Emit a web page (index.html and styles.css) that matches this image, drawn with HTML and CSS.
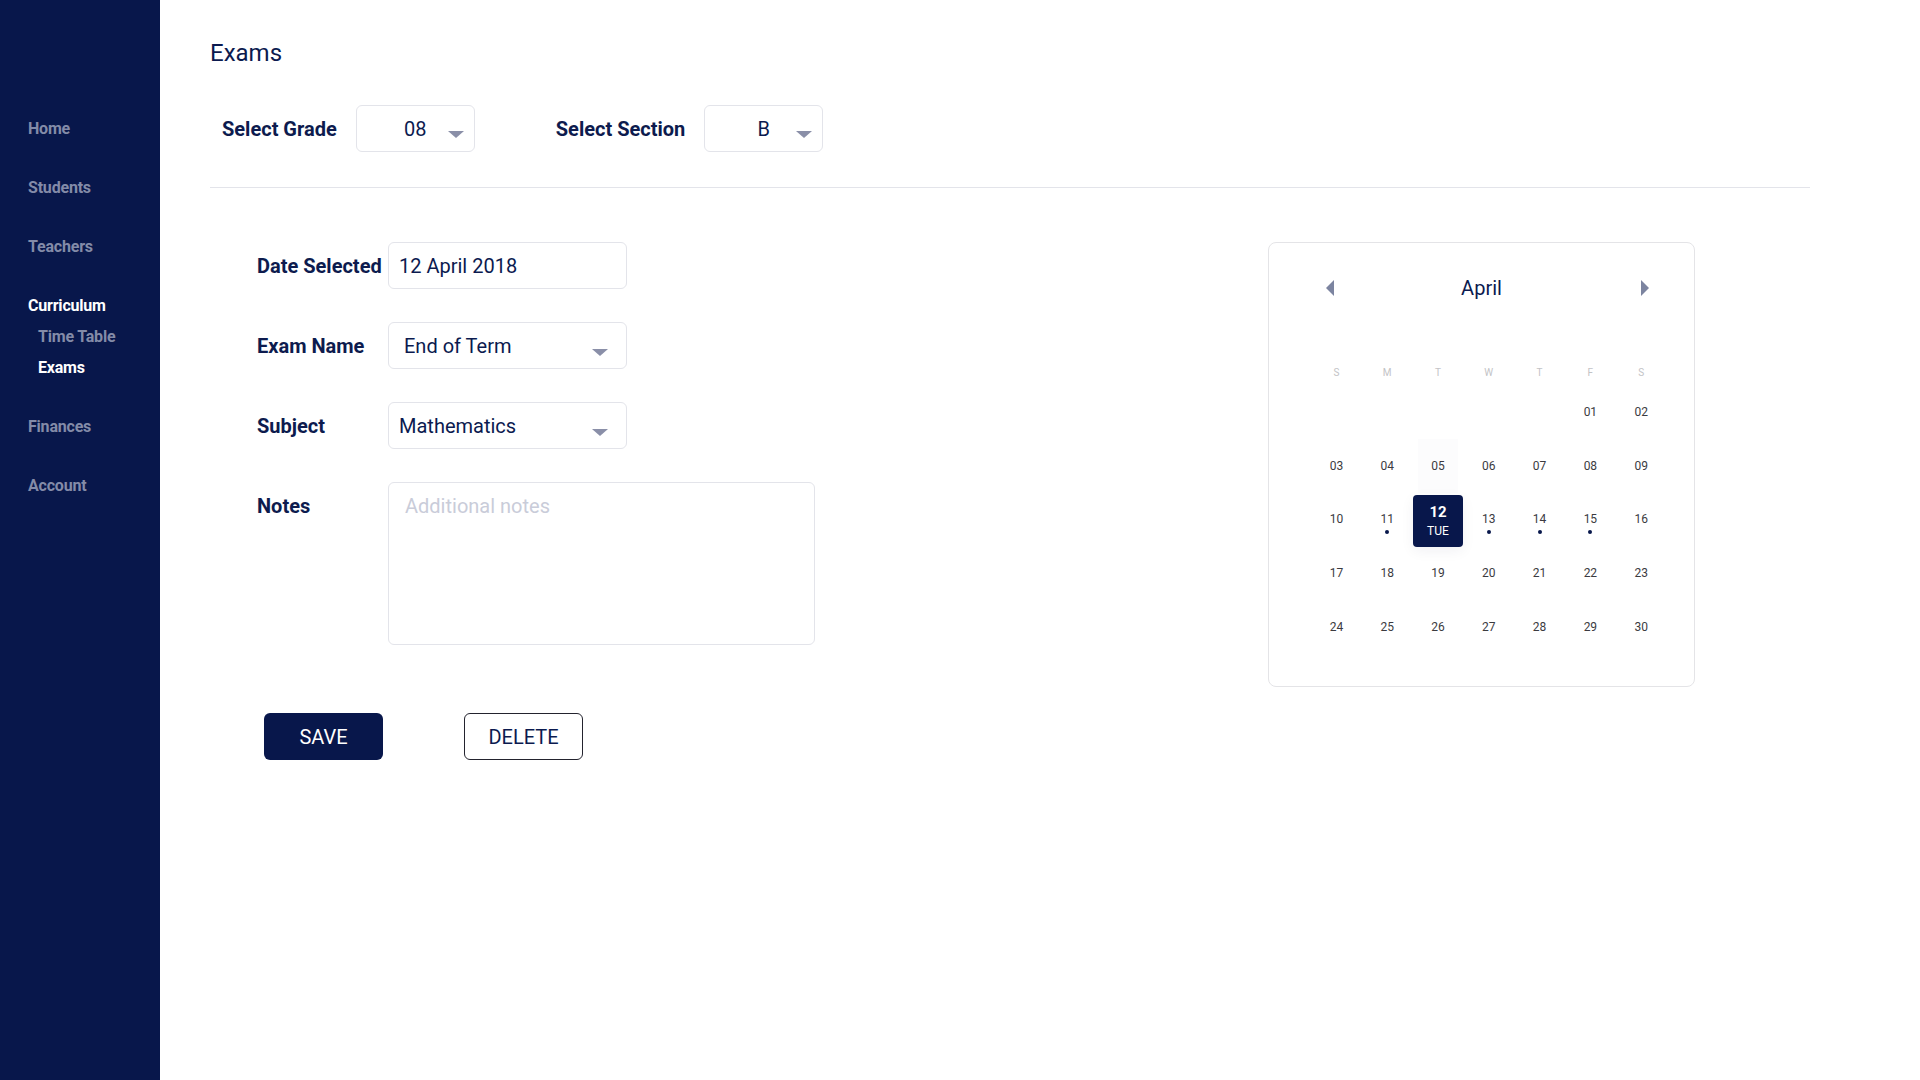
FILE: index.html
```html
<!DOCTYPE html>
<html lang="en">
<head>
<meta charset="utf-8">
<title>Exams</title>
<link rel="stylesheet" href="styles.css">
</head>
<body>
<div class="app">
  <aside class="sidebar">
    <nav class="nav">
      <a class="nav-item">Home</a>
      <a class="nav-item">Students</a>
      <a class="nav-item">Teachers</a>
      <a class="nav-item active has-sub">Curriculum</a>
      <a class="nav-sub">Time Table</a>
      <a class="nav-sub active last">Exams</a>
      <a class="nav-item">Finances</a>
      <a class="nav-item">Account</a>
    </nav>
  </aside>
  <main class="main">
    <h1 class="title">Exams</h1>
    <div class="filters">
      <span class="label filter-label">Select Grade</span>
      <div class="select select-sm"><span class="value">08</span><span class="caret caret-sm"></span></div>
      <span class="label filter-label filter-gap">Select Section</span>
      <div class="select select-sm"><span class="value">B</span><span class="caret caret-sm"></span></div>
    </div>
    <div class="divider"></div>
    <div class="content">
      <div class="form">
        <div class="row">
          <span class="label row-label">Date Selected</span>
          <div class="field">12 April 2018</div>
        </div>
        <div class="row">
          <span class="label row-label">Exam Name</span>
          <div class="field field-select field-wide-pad">End of Term<span class="caret caret-lg"></span></div>
        </div>
        <div class="row">
          <span class="label row-label">Subject</span>
          <div class="field field-select">Mathematics<span class="caret caret-lg"></span></div>
        </div>
        <div class="row row-notes">
          <span class="label row-label notes-label">Notes</span>
          <div class="textarea"><span class="placeholder">Additional notes</span></div>
        </div>
        <div class="buttons">
          <button class="btn btn-primary">SAVE</button>
          <button class="btn btn-outline">DELETE</button>
        </div>
      </div>
      <div class="calendar">
        <div class="cal-head">
          <span class="arrow arrow-left"></span>
          <span class="month">April</span>
          <span class="arrow arrow-right"></span>
        </div>
        <div class="cal-grid cal-week">
          <span>S</span><span>M</span><span>T</span><span>W</span><span>T</span><span>F</span><span>S</span>
        </div>
        <div class="cal-grid cal-days">
          <span class="cell"></span><span class="cell"></span><span class="cell"></span><span class="cell"></span><span class="cell"></span>
          <span class="cell">01</span><span class="cell">02</span>
          <span class="cell">03</span><span class="cell">04</span><span class="cell soft">05</span><span class="cell">06</span><span class="cell">07</span><span class="cell">08</span><span class="cell">09</span>
          <span class="cell">10</span><span class="cell dot">11</span>
          <span class="cell"><span class="selected"><span class="sel-num">12</span><span class="sel-day">TUE</span></span></span>
          <span class="cell dot">13</span><span class="cell dot">14</span><span class="cell dot">15</span><span class="cell">16</span>
          <span class="cell">17</span><span class="cell">18</span><span class="cell">19</span><span class="cell">20</span><span class="cell">21</span><span class="cell">22</span><span class="cell">23</span>
          <span class="cell">24</span><span class="cell">25</span><span class="cell">26</span><span class="cell">27</span><span class="cell">28</span><span class="cell">29</span><span class="cell">30</span>
        </div>
      </div>
    </div>
  </main>
</div>
</body>
</html>
```
FILE: styles.css
```css
* { box-sizing: border-box; }

body {
  margin: 0;
  font-family: Roboto, "Liberation Sans", Arial, sans-serif;
  color: #0b1a4f;
  background: #ffffff;
}

.app {
  display: flex;
  min-height: 100vh;
}

/* Sidebar */
.sidebar {
  width: 160px;
  flex-shrink: 0;
  background: #08174b;
  padding-top: 119px;
}

.nav {
  display: flex;
  flex-direction: column;
  padding-left: 28px;
}

.nav-item,
.nav-sub {
  font-size: 16px;
  font-weight: 700;
  line-height: 20px;
  color: #838ba8;
  margin-bottom: 39px;
  letter-spacing: -0.2px;
}

.nav-item.has-sub { margin-bottom: 11px; }
.nav-sub { padding-left: 10px; margin-bottom: 11px; }
.nav-sub.last { margin-bottom: 39px; }
.nav .active { color: #ffffff; }

/* Main */
.main {
  flex: 1;
  padding: 38px 110px 0 50px;
}

.title {
  margin: 0;
  font-size: 24px;
  font-weight: 400;
  line-height: 30px;
  color: #0b1a4f;
}

.label {
  font-size: 20px;
  font-weight: 700;
  color: #0d1b4e;
  line-height: 24px;
}

.filters {
  display: flex;
  align-items: center;
  margin-top: 37px;
  padding-left: 12px;
  height: 47px;
}

.filter-label { margin-right: 19px; }
.filter-gap { margin-left: 81px; }

.select {
  position: relative;
  width: 119px;
  height: 47px;
  border: 1px solid #e3e4ea;
  border-radius: 6px;
  display: flex;
  align-items: center;
  justify-content: center;
  font-size: 20px;
  color: #0b1a4f;
}

.caret {
  position: absolute;
  width: 0;
  height: 0;
  border-left: 8px solid transparent;
  border-right: 8px solid transparent;
  border-top: 7px solid #8a8fa8;
}

.caret-sm { right: 10px; top: 25px; }
.caret-lg { right: 18px; top: 26px; }

.divider {
  height: 1px;
  background: #e3e4ea;
  margin-top: 35px;
}

.content {
  display: flex;
  align-items: flex-start;
  margin-top: 54px;
}

.form {
  width: 1058px;
  flex-shrink: 0;
  padding-left: 47px;
}

.row {
  display: flex;
  align-items: center;
  margin-bottom: 33px;
}

.row-label { width: 131px; flex-shrink: 0; }

.field {
  position: relative;
  width: 239px;
  height: 47px;
  border: 1px solid #e3e4ea;
  border-radius: 6px;
  display: flex;
  align-items: center;
  padding-left: 10px;
  font-size: 20px;
  color: #0b1a4f;
}

.field-wide-pad { padding-left: 15px; }

.row-notes {
  align-items: flex-start;
  margin-bottom: 68px;
}

.notes-label { padding-top: 12px; }

.textarea {
  width: 427px;
  height: 163px;
  border: 1px solid #e3e4ea;
  border-radius: 6px;
  padding: 11px 16px;
  font-size: 20px;
  line-height: 24px;
}

.placeholder { color: #c9ccd9; }

.buttons {
  display: flex;
  gap: 81px;
  padding-left: 7px;
}

.btn {
  width: 119px;
  height: 47px;
  border-radius: 6px;
  font-family: Roboto, "Liberation Sans", Arial, sans-serif;
  font-size: 20px;
  font-weight: 400;
  text-transform: uppercase;
  cursor: pointer;
}

.btn-primary {
  background: #08174b;
  color: #ffffff;
  border: 0;
}

.btn-outline {
  background: #ffffff;
  color: #0b1a4f;
  border: 1px solid #23232e;
}

/* Calendar */
.calendar {
  width: 427px;
  height: 445px;
  border: 1px solid #e4e4e7;
  border-radius: 8px;
  padding-top: 31px;
}

.cal-head {
  position: relative;
  height: 28px;
  display: flex;
  align-items: center;
  justify-content: center;
}

.month {
  font-size: 20px;
  line-height: 28px;
  color: #0b1a4f;
}

.arrow {
  position: absolute;
  top: 6px;
  width: 0;
  height: 0;
  border-top: 8px solid transparent;
  border-bottom: 8px solid transparent;
}

.arrow-left { left: 57px; border-right: 8px solid #7c84a0; }
.arrow-right { right: 45px; border-left: 8px solid #7c84a0; }

.cal-grid {
  display: grid;
  grid-template-columns: repeat(7, 50.8px);
  padding-left: 42px;
}

.cal-week {
  margin-top: 57px;
  height: 26px;
  align-items: center;
  font-size: 10px;
  color: #c3c3c6;
  text-align: center;
}

.cal-days { grid-auto-rows: 53.75px; }

.cell {
  position: relative;
  display: flex;
  align-items: center;
  justify-content: center;
  font-size: 12px;
  color: #3b3b3f;
}

.cell.soft::before {
  content: "";
  position: absolute;
  left: 5px;
  right: 5px;
  top: 0;
  bottom: 0;
  background: #fcfcfd;
  z-index: -1;
}

.cell.dot::after {
  content: "";
  position: absolute;
  left: 50%;
  top: calc(50% + 11px);
  width: 4px;
  height: 4px;
  margin-left: -2px;
  border-radius: 50%;
  background: #08174b;
}

.selected {
  width: 53px;
  height: 52px;
  margin-top: 4px;
  background: #08174b;
  border-radius: 4px;
  box-shadow: 0 4px 14px rgba(8, 23, 75, 0.06);
  display: flex;
  flex-direction: column;
  align-items: center;
  justify-content: center;
  gap: 3px;
  color: #ffffff;
}

.sel-num {
  font-size: 15px;
  font-weight: 700;
  line-height: 18px;
}

.sel-day {
  font-size: 12px;
  line-height: 15px;
}
```
